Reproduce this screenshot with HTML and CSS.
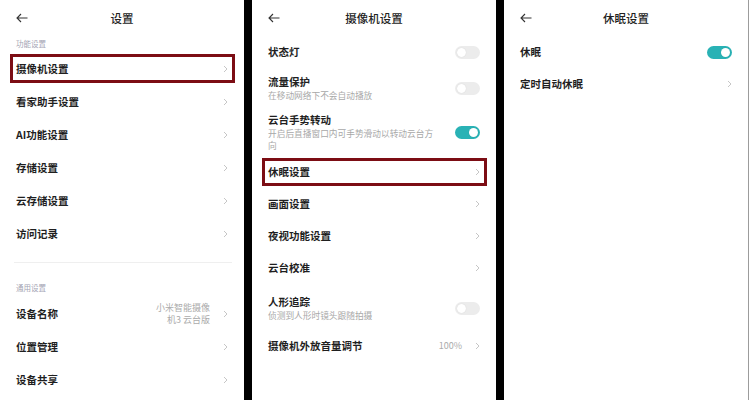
FILE: index.html
```html
<!DOCTYPE html>
<html lang="zh-CN">
<head>
    <meta charset="UTF-8">
    <meta name="viewport" content="width=device-width, initial-scale=1.0">
    <title>摄像机设置</title>
    <link rel="stylesheet" href="styles.css">
</head>
<body>
    <div class="screens">
        <!-- 设置 -->
        <section class="screen">
            <header class="bar">
                <svg class="back" width="12" height="10" viewBox="0 0 12 10"><path d="M11.5 5H1M5 1L1 5l4 4"/></svg>
                <h1>设置</h1>
                <span></span>
            </header>
            <div class="group-title">功能设置</div>
            <ul class="list">
                <li class="row hl"><span class="label">摄像机设置</span><svg class="chev" width="5" height="8" viewBox="0 0 5 8"><path d="M1 1l3 3-3 3"/></svg></li>
                <li class="row"><span class="label">看家助手设置</span><svg class="chev" width="5" height="8" viewBox="0 0 5 8"><path d="M1 1l3 3-3 3"/></svg></li>
                <li class="row"><span class="label">AI功能设置</span><svg class="chev" width="5" height="8" viewBox="0 0 5 8"><path d="M1 1l3 3-3 3"/></svg></li>
                <li class="row"><span class="label">存储设置</span><svg class="chev" width="5" height="8" viewBox="0 0 5 8"><path d="M1 1l3 3-3 3"/></svg></li>
                <li class="row"><span class="label">云存储设置</span><svg class="chev" width="5" height="8" viewBox="0 0 5 8"><path d="M1 1l3 3-3 3"/></svg></li>
                <li class="row"><span class="label">访问记录</span><svg class="chev" width="5" height="8" viewBox="0 0 5 8"><path d="M1 1l3 3-3 3"/></svg></li>
            </ul>
            <hr class="divider">
            <div class="group-title second">通用设置</div>
            <ul class="list">
                <li class="row">
                    <span class="label">设备名称</span>
                    <span class="value">小米智能摄像<br>机3 云台版</span>
                    <svg class="chev" width="5" height="8" viewBox="0 0 5 8"><path d="M1 1l3 3-3 3"/></svg>
                </li>
                <li class="row"><span class="label">位置管理</span><svg class="chev" width="5" height="8" viewBox="0 0 5 8"><path d="M1 1l3 3-3 3"/></svg></li>
                <li class="row"><span class="label">设备共享</span><svg class="chev" width="5" height="8" viewBox="0 0 5 8"><path d="M1 1l3 3-3 3"/></svg></li>
            </ul>
        </section>

        <!-- 摄像机设置 -->
        <section class="screen">
            <header class="bar">
                <svg class="back" width="12" height="10" viewBox="0 0 12 10"><path d="M11.5 5H1M5 1L1 5l4 4"/></svg>
                <h1>摄像机设置</h1>
                <span></span>
            </header>
            <ul class="list compact">
                <li class="row"><span class="label">状态灯</span><span class="toggle"><i class="knob"></i></span></li>
                <li class="row sub">
                    <div class="text">
                        <span class="label">流量保护</span>
                        <span class="hint">在移动网络下不会自动播放</span>
                    </div>
                    <span class="toggle"><i class="knob"></i></span>
                </li>
                <li class="row sub">
                    <div class="text">
                        <span class="label">云台手势转动</span>
                        <span class="hint">开启后直播窗口内可手势滑动以转动云台方向</span>
                    </div>
                    <span class="toggle on"><i class="knob"></i></span>
                </li>
                <li class="row hl"><span class="label">休眠设置</span><svg class="chev" width="5" height="8" viewBox="0 0 5 8"><path d="M1 1l3 3-3 3"/></svg></li>
                <li class="row"><span class="label">画面设置</span><svg class="chev" width="5" height="8" viewBox="0 0 5 8"><path d="M1 1l3 3-3 3"/></svg></li>
                <li class="row"><span class="label">夜视功能设置</span><svg class="chev" width="5" height="8" viewBox="0 0 5 8"><path d="M1 1l3 3-3 3"/></svg></li>
                <li class="row"><span class="label">云台校准</span><svg class="chev" width="5" height="8" viewBox="0 0 5 8"><path d="M1 1l3 3-3 3"/></svg></li>
                <li class="row sub loose">
                    <div class="text">
                        <span class="label">人形追踪</span>
                        <span class="hint">侦测到人形时镜头跟随拍摄</span>
                    </div>
                    <span class="toggle"><i class="knob"></i></span>
                </li>
                <li class="row">
                    <span class="label">摄像机外放音量调节</span>
                    <span class="value">100%</span>
                    <svg class="chev" width="5" height="8" viewBox="0 0 5 8"><path d="M1 1l3 3-3 3"/></svg>
                </li>
            </ul>
        </section>

        <!-- 休眠设置 -->
        <section class="screen last">
            <header class="bar">
                <svg class="back" width="12" height="10" viewBox="0 0 12 10"><path d="M11.5 5H1M5 1L1 5l4 4"/></svg>
                <h1>休眠设置</h1>
                <span></span>
            </header>
            <ul class="list compact">
                <li class="row"><span class="label">休眠</span><span class="toggle on"><i class="knob"></i></span></li>
                <li class="row"><span class="label">定时自动休眠</span><svg class="chev" width="5" height="8" viewBox="0 0 5 8"><path d="M1 1l3 3-3 3"/></svg></li>
            </ul>
        </section>
    </div>
</body>
</html>
```

FILE: styles.css
```css
body {
    margin: 0;
    padding: 0;
    background: #000;
    font-family: "Noto Sans CJK SC", "Noto Sans", sans-serif;
    color: #1f1f1f;
    width: 749px;
    height: 400px;
    overflow: hidden;
}
.screens {
    display: flex;
    gap: 8px;
    height: 400px;
}
.screen {
    flex: none;
    width: 244px;
    height: 400px;
    background: #fff;
}
.screen.last {
    border-right: 1px solid #9c9c9c;
}
.bar {
    display: grid;
    grid-template-columns: 1fr auto 1fr;
    align-items: center;
    height: 36px;
    padding: 0 16px;
    box-sizing: border-box;
}
.bar h1 {
    margin: 0;
    font-size: 11.5px;
    font-weight: 500;
    line-height: 16px;
    color: #222;
}
.back {
    fill: none;
    stroke: #333;
    stroke-width: 1.1;
}
.group-title {
    font-size: 7.5px;
    line-height: 16px;
    color: #a4a4b4;
    padding-left: 16px;
}
.group-title.second {
    padding-top: 18px;
    padding-bottom: 2px;
    line-height: 14px;
}
.list {
    list-style: none;
    margin: 0;
    padding: 0;
}
.row {
    position: relative;
    display: flex;
    align-items: center;
    height: 33px;
    padding: 0 16px;
    box-sizing: border-box;
}
.list.compact .row {
    height: 32px;
}
.list.compact .row.sub {
    height: auto;
    padding-top: 6px;
    padding-bottom: 4px;
}
.list.compact .row.loose {
    padding-top: 10px;
    padding-bottom: 8px;
}
.row.hl::after {
    content: "";
    position: absolute;
    top: 2px;
    bottom: 2px;
    left: 10px;
    right: 9px;
    border: 3px solid #7c0d14;
}
.label {
    font-size: 10.5px;
    font-weight: 700;
    line-height: 16px;
    color: #1f1f1f;
}
.text {
    display: flex;
    flex-direction: column;
    width: 167px;
}
.hint {
    font-size: 8.7px;
    line-height: 12px;
    color: #a8a8a8;
}
.value {
    margin-left: auto;
    margin-right: 13px;
    font-size: 9px;
    line-height: 11.5px;
    color: #ababab;
    text-align: right;
}
.chev {
    margin-left: auto;
    fill: none;
    stroke: #c6c6c6;
    stroke-width: 1;
}
.value + .chev {
    margin-left: 0;
}
.toggle {
    margin-left: auto;
    display: flex;
    align-items: center;
    width: 25px;
    height: 13px;
    padding: 0 2px;
    box-sizing: border-box;
    border-radius: 7px;
    background: #ececec;
}
.toggle.on {
    background: #29b2b5;
    justify-content: flex-end;
}
.knob {
    width: 9px;
    height: 9px;
    border-radius: 50%;
    background: #fff;
    box-shadow: 0 0 1px rgba(0, 0, 0, 0.15);
}
.divider {
    margin: 12px 12px 0 14px;
    border: 0;
    border-top: 1px solid #efefef;
}
```
